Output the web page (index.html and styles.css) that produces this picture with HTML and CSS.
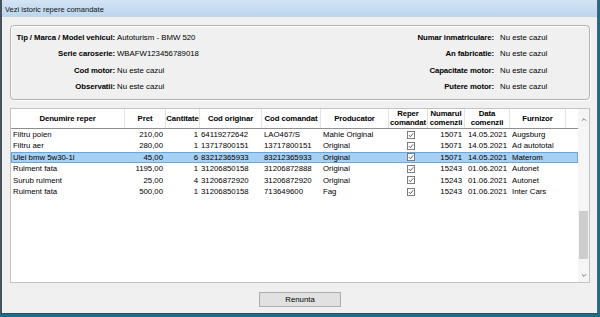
FILE: index.html
```html
<!DOCTYPE html>
<html>
<head>
<meta charset="utf-8">
<link rel="stylesheet" href="styles.css">
</head>
<body>
<div class="window">
  <div class="titlebar">Vezi istoric repere comandate</div>
  <div class="client">
    <div class="group">
      <div class="lbl">Tip / Marca / Model vehicul:</div><div class="val">Autoturism - BMW 520</div>
      <div class="rlbl">Numar inmatriculare:</div><div class="rval">Nu este cazul</div>
      <div class="lbl">Serie caroserie:</div><div class="val">WBAFW123456789018</div>
      <div class="rlbl">An fabricatie:</div><div class="rval">Nu este cazul</div>
      <div class="lbl">Cod motor:</div><div class="val">Nu este cazul</div>
      <div class="rlbl">Capacitate motor:</div><div class="rval">Nu este cazul</div>
      <div class="lbl">Observatii:</div><div class="val">Nu este cazul</div>
      <div class="rlbl">Putere motor:</div><div class="rval">Nu este cazul</div>
    </div>

    <div class="gridbox">
      <div class="gridmain">
        <div class="row head">
          <div class="hc">Denumire reper</div>
          <div class="hc">Pret</div>
          <div class="hc">Cantitate</div>
          <div class="hc">Cod originar</div>
          <div class="hc">Cod comandat</div>
          <div class="hc">Producator</div>
          <div class="hc two">Reper<br>comandat</div>
          <div class="hc two">Numarul<br>comenzii</div>
          <div class="hc two">Data<br>comenzii</div>
          <div class="hc">Furnizor</div>
          <div class="hc last"></div>
        </div>

        <div class="row">
          <div class="c">Filtru polen</div><div class="c r">210,00</div><div class="c r q">1</div><div class="c o">64119272642</div><div class="c">LAO467/S</div><div class="c">Mahle Original</div><div class="c ck"><svg class="chk" viewBox="0 0 9 9"><rect x="0.5" y="0.5" width="8" height="8" fill="#fff" stroke="#707070"/><polyline points="2,4.6 3.8,6.4 7,2.6" fill="none" stroke="#333" stroke-width="0.9"/></svg></div><div class="c r n">15071</div><div class="c m">14.05.2021</div><div class="c">Augsburg</div><div class="c"></div>
        </div>
        <div class="row">
          <div class="c">Filtru aer</div><div class="c r">280,00</div><div class="c r q">1</div><div class="c o">13717800151</div><div class="c">13717800151</div><div class="c">Original</div><div class="c ck"><svg class="chk" viewBox="0 0 9 9"><rect x="0.5" y="0.5" width="8" height="8" fill="#fff" stroke="#707070"/><polyline points="2,4.6 3.8,6.4 7,2.6" fill="none" stroke="#333" stroke-width="0.9"/></svg></div><div class="c r n">15071</div><div class="c m">14.05.2021</div><div class="c">Ad autototal</div><div class="c"></div>
        </div>
        <div class="row sel">
          <div class="c">Ulei bmw 5w30-1l</div><div class="c r">45,00</div><div class="c r q">6</div><div class="c o">83212365933</div><div class="c">83212365933</div><div class="c">Original</div><div class="c ck"><svg class="chk" viewBox="0 0 9 9"><rect x="0.5" y="0.5" width="8" height="8" fill="#fff" stroke="#707070"/><polyline points="2,4.6 3.8,6.4 7,2.6" fill="none" stroke="#333" stroke-width="0.9"/></svg></div><div class="c r n">15071</div><div class="c m">14.05.2021</div><div class="c">Materom</div><div class="c"></div>
        </div>
        <div class="row">
          <div class="c">Rulment fata</div><div class="c r">1195,00</div><div class="c r q">1</div><div class="c o">31206850158</div><div class="c">31206872888</div><div class="c">Original</div><div class="c ck"><svg class="chk" viewBox="0 0 9 9"><rect x="0.5" y="0.5" width="8" height="8" fill="#fff" stroke="#707070"/><polyline points="2,4.6 3.8,6.4 7,2.6" fill="none" stroke="#333" stroke-width="0.9"/></svg></div><div class="c r n">15243</div><div class="c m">01.06.2021</div><div class="c">Autonet</div><div class="c"></div>
        </div>
        <div class="row">
          <div class="c">Surub rulment</div><div class="c r">25,00</div><div class="c r q">4</div><div class="c o">31206872920</div><div class="c">31206872920</div><div class="c">Original</div><div class="c ck"><svg class="chk" viewBox="0 0 9 9"><rect x="0.5" y="0.5" width="8" height="8" fill="#fff" stroke="#707070"/><polyline points="2,4.6 3.8,6.4 7,2.6" fill="none" stroke="#333" stroke-width="0.9"/></svg></div><div class="c r n">15243</div><div class="c m">01.06.2021</div><div class="c">Autonet</div><div class="c"></div>
        </div>
        <div class="row">
          <div class="c">Rulment fata</div><div class="c r">500,00</div><div class="c r q">1</div><div class="c o">31206850158</div><div class="c">713649600</div><div class="c">Fag</div><div class="c ck"><svg class="chk" viewBox="0 0 9 9"><rect x="0.5" y="0.5" width="8" height="8" fill="#fff" stroke="#707070"/><polyline points="2,4.6 3.8,6.4 7,2.6" fill="none" stroke="#333" stroke-width="0.9"/></svg></div><div class="c r n">15243</div><div class="c m">01.06.2021</div><div class="c">Inter Cars</div><div class="c"></div>
        </div>
      </div>
      <div class="vscroll">
        <svg class="arrow" viewBox="0 0 7 5"><polyline points="1,4 3.5,1.5 6,4" fill="none" stroke="#606060" stroke-width="1"/></svg>
        <div class="track"><div class="thumb"></div></div>
        <svg class="arrow" viewBox="0 0 7 5"><polyline points="1,1 3.5,3.5 6,1" fill="none" stroke="#606060" stroke-width="1"/></svg>
      </div>
    </div>

    <div class="footer">
      <button class="btn">Renunta</button>
    </div>
  </div>
</div>
</body>
</html>
```

FILE: styles.css
```css
html, body {
  margin: 0;
  padding: 0;
}
body {
  width: 600px;
  height: 317px;
  background: #1f6c84;
  font-family: "Liberation Sans", Arial, sans-serif;
  font-size: 7.8px;
  color: #000;
  overflow: hidden;
}
.window {
  width: 595px;
  height: 313px;
  border-left: 2px solid #47525c;
  border-right: 1px solid #56616b;
  border-bottom: 1px solid #3f4a54;
  display: flex;
  flex-direction: column;
  background: #f0f0f0;
}
.titlebar {
  height: 17px;
  line-height: 19px;
  padding-left: 3px;
  font-family: "Liberation Sans", Arial, sans-serif;
  font-size: 7.5px;
  color: #111;
  background: linear-gradient(#d3e4f5, #bcd5ed);
  flex: none;
}
.client {
  flex: 1;
  display: flex;
  flex-direction: column;
  padding: 8px 7px 0 8px;
}
.group {
  border: 1px solid #b3b3b3;
  border-radius: 4px;
  box-shadow: inset 1px 1px 0 #fff, 1px 1px 0 #fff;
  display: grid;
  grid-template-columns: 104px 1fr auto 95px;
  grid-auto-rows: 16.4px;
  align-content: start;
  padding-top: 4px;
  box-sizing: border-box;
  height: 75px;
}
.group > div {
  line-height: 16.4px;
  white-space: nowrap;
}
.lbl, .rlbl {
  font-weight: bold;
  text-align: right;
  letter-spacing: -0.1px;
}
.val {
  padding-left: 2px;
}
.rval {
  padding-left: 6px;
}
.gridbox {
  margin-top: 8px;
  height: 175px;
  box-sizing: border-box;
  border: 1px solid #c3c3c3;
  background: #fff;
  display: flex;
}
.gridmain {
  flex: 1;
  display: flex;
  flex-direction: column;
}
.row {
  display: grid;
  grid-template-columns: 114px 41px 34px 62px 59px 68px 39px 37px 45px 56px 12px;
  height: 11.4px;
  line-height: 11.4px;
}
.row.head {
  height: 19px;
  line-height: 19px;
  border-bottom: 1px solid #8f8f8f;
}
.hc {
  font-weight: bold;
  text-align: center;
  border-right: 1px solid #e3e3e3;
  white-space: nowrap;
  letter-spacing: -0.1px;
}
.hc.last {
  border-right: none;
}
.hc.two {
  line-height: 8.6px;
  padding-top: 1px;
}
.c {
  padding-left: 2px;
  white-space: nowrap;
  overflow: hidden;
}
.c.r {
  text-align: right;
  padding-left: 0;
  padding-right: 3px;
}
.c.q {
  padding-right: 2px;
}
.c.o {
  padding-left: 1px;
}
.c.n {
  padding-right: 3px;
}
.c.m {
  text-align: center;
  padding-left: 0;
}
.c.ck {
  display: flex;
  align-items: center;
  justify-content: center;
  padding-left: 4px;
}
.chk {
  width: 8px;
  height: 8px;
  display: block;
}
.row.sel {
  background: #a6d1f4;
  box-shadow: inset 0 0 0 1px #64a6df;
}
.vscroll {
  width: 11px;
  flex: none;
  background: #f5f5f5;
  display: flex;
  flex-direction: column;
  align-items: center;
}
.arrow {
  width: 6px;
  height: 5px;
  margin: 8px 0 4px;
  flex: none;
}
.vscroll .arrow:last-child {
  margin: 3px 0 4px;
}
.track {
  flex: 1;
  width: 100%;
  display: flex;
  flex-direction: column;
  justify-content: flex-end;
  padding-bottom: 11px;
  box-sizing: border-box;
}
.thumb {
  height: 48px;
  margin: 0 1px;
  background: #cdcdcd;
}
.footer {
  flex: 1;
  display: flex;
  justify-content: center;
  align-items: flex-start;
  padding-top: 9px;
}
.btn {
  width: 82px;
  height: 15px;
  padding: 0;
  margin: 0;
  border: 1px solid #adadad;
  background: #e1e1e1;
  font-family: "Liberation Sans", Arial, sans-serif;
  font-size: 7.8px;
  color: #000;
}
```
